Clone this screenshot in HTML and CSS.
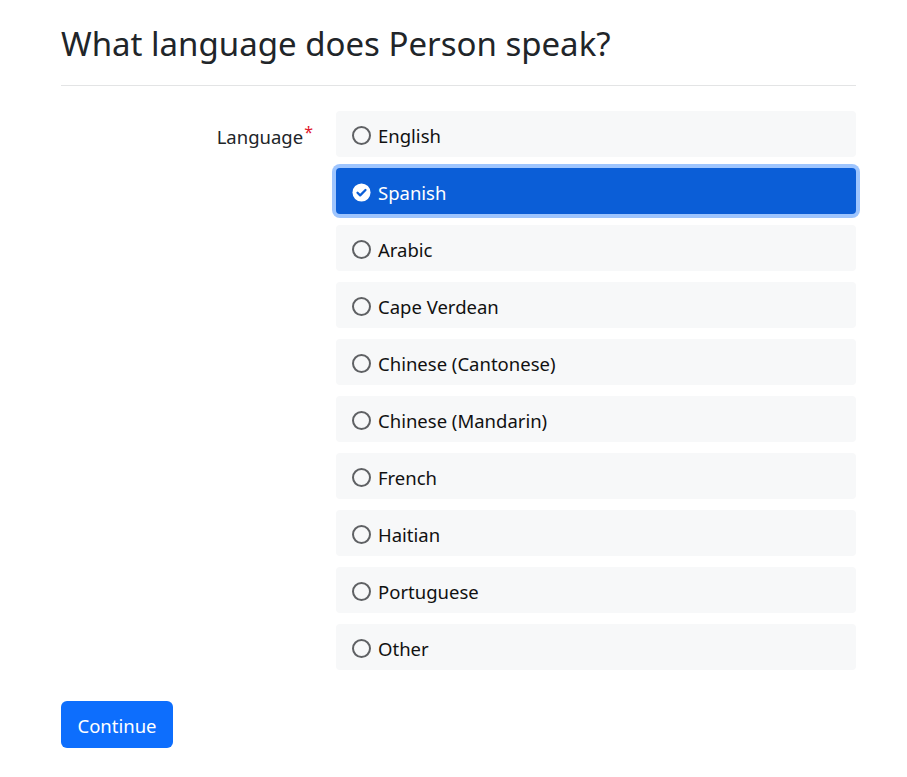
FILE: index.html
```html
<!DOCTYPE html>
<html lang="en">
<head>
<meta charset="utf-8">
<title>Language</title>
<link rel="stylesheet" href="styles.css">
</head>
<body>
<main class="page">
  <h1 class="title">What language does Person speak?</h1>
  <hr class="rule">
  <form class="form">
    <div class="field">
      <div class="field-label">Language<span class="req">*</span></div>
      <div class="options">
        <label class="option"><span class="radio"></span><span class="option-text">English</span></label>
        <label class="option option-selected"><svg class="check" viewBox="0 0 20 20" width="19" height="19"><circle cx="10" cy="10" r="9.5" fill="#fff"/><path d="M5.8 10.3 L8.6 13 L14.2 7.4" fill="none" stroke="#0b5ed7" stroke-width="2.4" stroke-linecap="round" stroke-linejoin="round"/></svg><span class="option-text">Spanish</span></label>
        <label class="option"><span class="radio"></span><span class="option-text">Arabic</span></label>
        <label class="option"><span class="radio"></span><span class="option-text">Cape Verdean</span></label>
        <label class="option"><span class="radio"></span><span class="option-text">Chinese (Cantonese)</span></label>
        <label class="option"><span class="radio"></span><span class="option-text">Chinese (Mandarin)</span></label>
        <label class="option"><span class="radio"></span><span class="option-text">French</span></label>
        <label class="option"><span class="radio"></span><span class="option-text">Haitian</span></label>
        <label class="option"><span class="radio"></span><span class="option-text">Portuguese</span></label>
        <label class="option"><span class="radio"></span><span class="option-text">Other</span></label>
      </div>
    </div>
    <button type="button" class="btn">Continue</button>
  </form>
</main>
</body>
</html>
```

FILE: styles.css
```css
* { box-sizing: border-box; }
html, body { margin: 0; padding: 0; background: #fff; }
body {
  font-family: "Noto Sans", "Open Sans", sans-serif;
  color: #212529;
}
.page {
  width: 795px;
  margin-left: 61px;
}
.title {
  font-size: 33px;
  font-weight: 400;
  line-height: 1.2;
  margin: 24px 0 0;
  color: #212529;
}
.rule {
  border: 0;
  border-top: 1px solid #e3e4e5;
  margin: 21px 0 25px;
}
.field {
  display: grid;
  grid-template-columns: 252px 520px;
  column-gap: 23px;
}
.field-label {
  text-align: right;
  font-size: 18.5px;
  line-height: 30px;
  padding-top: 11px;
  color: #212529;
}
.req {
  color: #e0162b;
  font-size: 16px;
  vertical-align: 6px;
  line-height: 0;
  margin-left: 1px;
}
.options {
  display: flex;
  flex-direction: column;
  gap: 11px;
}
.option {
  display: flex;
  align-items: center;
  height: 46px;
  padding-left: 16px;
  padding-top: 4px;
  background: #f7f8f9;
  border-radius: 4px;
  font-size: 18.5px;
  color: #111;
  gap: 7px;
}
.radio {
  width: 19px;
  height: 19px;
  border: 2px solid #5f6164;
  border-radius: 50%;
  flex: none;
  margin-top: -1px;
}
.check { flex: none; margin-top: -1px; }
.option-selected {
  background: #0b5ed7;
  color: #fff;
  box-shadow: 0 0 0 4px #9ec5fe;
  border-radius: 4px;
}
.btn {
  margin-top: 31px;
  height: 47px;
  width: 112px;
  background: #0d6efd;
  color: #fff;
  border: 0;
  border-radius: 6px;
  font-family: inherit;
  font-size: 18.5px;
  padding: 2px 0 0;
}
```
